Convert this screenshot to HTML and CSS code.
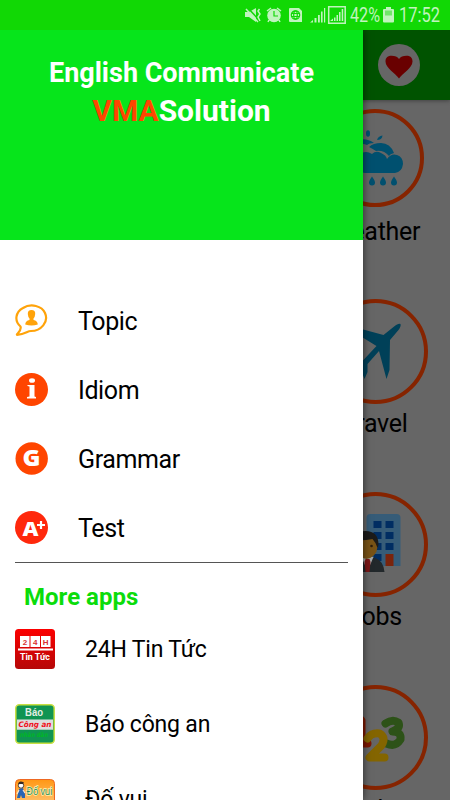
FILE: index.html
```html
<!DOCTYPE html>
<html lang="en">
<head>
    <meta charset="UTF-8">
    <title>English Communicate</title>
    <link rel="stylesheet" href="styles.css">
</head>
<body>
    <div class="phone">
        <div class="status-bar">
            <svg class="status-icons" width="220" height="30" viewBox="230 0 220 30">
                <!-- muted -->
                <path d="M245 12h4l7-4v14l-7-5h-4z"/>
                <path class="cut" d="M247 7l13 14"/>
                <path class="line" d="M246 9l12 13M259.500 9l-1.500 2 2 3-2 3 2 4"/>
                <!-- alarm -->
                <circle cx="274" cy="15.500" r="6.800"/>
                <path class="line" d="M267 11l4-3M281 11l-4-3M269 20l-1 2M279 20l1 2"/>
                <path class="cut thin" d="M274 11v5h4"/>
                <!-- sim -->
                <path d="M290 8h9l3 3v11h-12q-1 0-1-1V9q0-1 1-1z"/>
                <g class="cut thin"><circle cx="295.500" cy="15" r="4.200"/><ellipse cx="295.500" cy="15" rx="1.800" ry="4.200"/><path d="M291.500 13.500h8M291.500 16.500h8"/></g>
                <!-- signal -->
                <path d="M310 22.500l3-2.500v2.500zM314.500 18h2v4.500h-2zM318 15h1.800v7.500H318zM321 11.500h1.600v11H321zM324 8h1.200v14.500H324z"/>
                <path class="line" d="M328.700 6.800h16.500v16.400h-16.500z"/>
                <path d="M330 21l3-2.500V21zM334 17.500h1.500V21H334zM336.500 15h1.500v6h-1.500zM339 12h1.500v9H339zM341.700 9h1.500v12h-1.500z"/>
                <text x="350" y="22" textLength="30" lengthAdjust="spacingAndGlyphs">42%</text>
                <!-- battery -->
                <path d="M386 7h5v2h-5zM384 9h9q1 0 1 1v11.500q0 1-1 1h-9q-1 0-1-1V10q0-1 1-1z"/>
                <path class="empty" d="M385 10.500h7v5h-7z"/>
                <text x="399" y="22" textLength="41" lengthAdjust="spacingAndGlyphs">17:52</text>
            </svg>
        </div>

        <div class="toolbar">
            <div class="favorite">
                <svg width="28" height="24" viewBox="0 0 28 24"><path d="M14 23.500C11 19 .5 13 .5 6.500.5 2.500 3 .8 6.500.8c3.500 0 6 1 7.500 3.200C15.500 1.800 18 .8 21.500.8c3.500 0 6 1.700 6 5.700C27.500 13 17 19 14 23.500z"/></svg>
            </div>
        </div>

        <div class="topics">
            <div class="topic">
                <svg class="topic-icon small" viewBox="326 109 98 98">
                    <circle class="ring" cx="375" cy="158" r="47"/>
                    <g fill="#00506f">
                        <ellipse cx="368" cy="133.500" rx="2" ry="3.300"/>
                        <path d="M377 140q1-4 5.500-4.500-.5 4.500-5.500 4.500z"/>
                        <path d="M355 142q9-6 19 1-5 0-7 2-4-2-10 0z"/>
                        <path d="M369 147q4-4 12-4 9 0 13 10-4 1-5 3-5-6-13-5-3-2-7-4z"/>
                        <path d="M365 173q-11-1-11-11 1-10 12-10 3 0 6 2 4-4 9-1 5 2 6 6 4-6 10-4 6 2 6 9-1 8-8 9z"/>
                        <path d="M372 176.500q3 4 3 6a3 3 0 0 1-6 0q0-2 3-6zM383 176.500q3 4 3 6a3 3 0 0 1-6 0q0-2 3-6zM394 176.500q3 4 3 6a3 3 0 0 1-6 0q0-2 3-6z"/>
                    </g>
                </svg>
                <span>Weather</span>
            </div>
            <div class="topic">
                <svg class="topic-icon" viewBox="322.500 299 105 105">
                    <circle class="ring" cx="375" cy="351.500" r="50.500"/>
                    <path fill="#004058" d="M400 324q.8 2-2 6l-8.500 10-.5 30-3 9-7.500-28L367 364v8l-3 7-4-10-9-4 3-3 8-1 14-15-13-8-20-10 3-3 37 10L393 327q5-4 7-3z"/>
                </svg>
                <span>Travel</span>
            </div>
            <div class="topic">
                <svg class="topic-icon" viewBox="322.500 492 105 105">
                    <circle class="ring" cx="375" cy="544.500" r="50.500"/>
                    <path fill="#365c78" d="M366 566v-48q0-4 4-4h26q4 0 4 4v48z"/>
                    <path fill="#002d62" d="M373 521h8v7h-8zM385 521h8v7h-8zM373 532h8v7h-8zM385 532h8v7h-8zM373 543h8v7h-8zM385 543h8v7h-8zM373 554h8v7h-8z"/>
                    <path fill="#7a240c" d="M385 554h8v12h-8z"/>
                    <path fill="#22282b" d="M350 572q0-12 11-14l5-2 9 2q8 3 9 14z"/>
                    <path fill="#a4a9aa" d="M361 557l6 14 6-14z"/>
                    <path fill="#7c1717" d="M365 559h4l1 3-1 10h-4l-1-10z"/>
                    <path fill="#785316" d="M354 544q0-8 11-9 12 1 12 12-1 10-11 12-11-2-12-15z"/>
                    <path fill="#1c1b19" d="M353 548q-3-17 12-17 13 0 13 14l-1 3q-2-6-5-9-10 2-16 1-2 3-3 8z"/>
                    <circle fill="#2b1c0b" cx="371" cy="546" r="1.300"/>
                </svg>
                <span>Jobs</span>
            </div>
            <div class="topic">
                <svg class="topic-icon" viewBox="322.500 684.500 105 105">
                    <circle class="ring" cx="375" cy="737" r="50.500"/>
                    <g class="digits">
                        <path stroke="#7e1800" d="M353 724l8-4v23M352 743h15"/>
                        <path stroke="#2d5218" d="M385 723q7-5 13-1 2 6-6 9 9 0 8 8-5 8-14 4"/>
                        <path stroke="#846500" d="M367 738q4-6 12-5 7 4 2 12l-12 12h15"/>
                    </g>
                </svg>
                <span>Numbers</span>
            </div>
        </div>

        <div class="drawer">
            <div class="drawer-header">
                <div class="app-name">English Communicate</div>
                <div class="company"><span class="vma">VMA</span>Solution</div>
            </div>

            <div class="menu">
                <div class="menu-item">
                    <svg width="33" height="33" viewBox="0 0 33 33">
                        <path fill="none" stroke="#ffa30a" stroke-width="2.200" stroke-linejoin="round" d="M5.500 22.500C-1 17 .5 8 8 4c8-5 19-2 22 5 4 9-4 18-14 18-4 0-5 3-14 3.800C1 30.500 7 27 5.500 22.500z"/>
                        <path fill="#ffa30a" d="M16.500 6q4 0 3.700 4-.2 3-1.700 4.500v1.500q4 .5 4.300 4.500-6.300 2-12.600 0 .3-4 4.300-4.500v-1.500q-1.500-1.500-1.700-4.500-.2-4 3.700-4z"/>
                    </svg>
                    <span>Topic</span>
                </div>
                <div class="menu-item">
                    <svg width="33" height="33" viewBox="0 0 33 33">
                        <circle fill="#ff4500" cx="16.500" cy="16.500" r="16.500"/>
                        <ellipse fill="#fff" cx="17" cy="7.500" rx="3" ry="2.300"/>
                        <path fill="#fff" d="M12.500 12h7v11.500l1.500.5v1.500h-9V24l2.500-.5v-10L12.500 13z"/>
                    </svg>
                    <span>Idiom</span>
                </div>
                <div class="menu-item">
                    <svg width="33" height="33" viewBox="0 0 33 33">
                        <circle fill="#ff4500" cx="16.700" cy="16.500" r="16.200"/>
                        <text class="badge-letter" x="7.500" y="24" font-size="22" textLength="18" lengthAdjust="spacingAndGlyphs">G</text>
                    </svg>
                    <span>Grammar</span>
                </div>
                <div class="menu-item">
                    <svg width="33" height="33" viewBox="0 0 33 33">
                        <circle fill="#ff280c" cx="16.500" cy="16.500" r="16.500"/>
                        <text class="badge-letter" x="7.500" y="24.500" font-size="20" textLength="16" lengthAdjust="spacingAndGlyphs">A</text>
                        <path stroke="#fff" stroke-width="2.200" d="M22 14h8M26 10v8"/>
                    </svg>
                    <span>Test</span>
                </div>
            </div>

            <div class="more-title">More apps</div>
            <div class="apps">
                <div class="app-item">
                    <svg width="40" height="40" viewBox="0 0 40 40">
                        <defs><linearGradient id="red" x2="0" y2="1"><stop stop-color="#fc0000"/><stop offset="1" stop-color="#b50808"/></linearGradient></defs>
                        <rect fill="url(#red)" width="40" height="40" rx="3.500"/>
                        <path fill="#fff" d="M5 7h9.500v11H5zM15.500 7H25v11h-9.500zM26 7h9.500v11H26zM3 19.500h35v2H3z"/>
                        <g class="clock-text"><text x="10" y="15.500">2</text><text x="20.300" y="15.500">4</text><text x="30.700" y="15.500">H</text></g>
                        <text class="news-text" x="5" y="31" textLength="30" lengthAdjust="spacingAndGlyphs">Tin Tức</text>
                    </svg>
                    <span>24H Tin Tức</span>
                </div>
                <div class="app-item">
                    <svg width="40" height="40" viewBox="0 0 40 40">
                        <rect fill="#109452" stroke="#c8df41" stroke-width="1.500" x=".8" y=".8" width="38.400" height="38.400" rx="3.500"/>
                        <path fill="#ddd" d="M2 15.500h36v10.300H2z"/>
                        <text class="police-text upright" x="10" y="12" font-size="10" fill="#e4eee5" textLength="18" lengthAdjust="spacingAndGlyphs">Báo</text>
                        <text class="police-text slanted" x="3.500" y="23.200" font-size="7.500" fill="#f01020" textLength="33" lengthAdjust="spacingAndGlyphs">Công an</text>
                        <text class="police-text slanted" x="5" y="33" font-size="6.500" fill="#00b627" textLength="28" lengthAdjust="spacingAndGlyphs">nhân dân</text>
                    </svg>
                    <span>Báo công an</span>
                </div>
                <div class="app-item">
                    <svg width="40" height="40" viewBox="0 0 40 40">
                        <defs><linearGradient id="orange" x2="0" y2="1"><stop stop-color="#ff9714"/><stop offset=".6" stop-color="#ffc16b"/></linearGradient></defs>
                        <rect fill="url(#orange)" stroke="#ee6822" x=".5" y=".5" width="39" height="39" rx="4"/>
                        <circle fill="#fff" stroke="#222" stroke-width=".8" cx="6" cy="6.500" r="2.700"/>
                        <path fill="#332824" d="M3 5q1-4 6-1.500L8 5z"/>
                        <path fill="#2864b4" d="M4 10l4-1 2 6v4H7l-1-3-1 3H2z"/>
                        <path stroke="#f7e6d5" stroke-width="1.200" d="M4 11l-2 4M8 11l2 3"/>
                        <text class="quiz-text" x="11.500" y="15.500" textLength="26" lengthAdjust="spacingAndGlyphs">Đố vui</text>
                    </svg>
                    <span>Đố vui</span>
                </div>
            </div>
        </div>
    </div>
</body>
</html>
```

FILE: styles.css
```css
body {
    margin: 0;
    font-family: Roboto, sans-serif;
    color: #000;
}

.phone {
    position: relative;
    width: 450px;
    height: 800px;
    overflow: hidden;
    background-color: #666;
}

.status-bar {
    height: 30px;
    display: flex;
    justify-content: flex-end;
    background-color: #11d805;
}

.status-icons {
    fill: #c0f4bd;
    font-size: 19.5px;
}

.status-icons .line {
    fill: none;
    stroke: #c0f4bd;
    stroke-width: 1.5;
}

.status-icons .cut {
    fill: none;
    stroke: #11d805;
    stroke-width: 1.5;
}

.status-icons .thin {
    stroke-width: 1.2;
}

.status-icons .empty {
    fill: #70e669;
}

/* Page behind the drawer */
.toolbar {
    height: 70px;
    display: flex;
    justify-content: flex-end;
    align-items: center;
    padding-right: 30px;
    box-sizing: border-box;
    background-color: #005300;
    box-shadow: 0 1px 4px rgba(0, 0, 0, 0.35);
    clip-path: inset(0 0 -6px 0);
}

.favorite {
    width: 42px;
    height: 42px;
    border-radius: 50%;
    background-color: #666;
    display: flex;
    align-items: center;
    justify-content: center;
}

.favorite svg {
    margin-top: 3px;
    fill: #690000;
}

.topics {
    width: 150px;
    margin-left: 300px;
    padding-top: 9px;
}

.topic {
    display: flex;
    flex-direction: column;
    align-items: center;
    height: 193px;
    font-size: 25px;
    letter-spacing: -0.3px;
    line-height: 30px;
}

.topic:first-child {
    height: 190px;
}

.topic-icon {
    width: 105px;
    height: 105px;
    margin-bottom: 5px;
    flex-shrink: 0;
}

.topic-icon.small {
    width: 98px;
    height: 98px;
    margin-bottom: 10px;
}

.ring {
    fill: none;
    stroke: #862400;
    stroke-width: 4;
}

.digits {
    fill: none;
    stroke-width: 8;
    stroke-linecap: round;
    stroke-linejoin: round;
}

/* Navigation drawer */
.drawer {
    position: absolute;
    top: 30px;
    left: 0;
    width: 363px;
    height: 770px;
    overflow: hidden;
    background-color: #fff;
    box-shadow: 0 0 8px rgba(0, 0, 0, 0.6);
    clip-path: inset(0 -12px 0 0);
}

.drawer-header {
    height: 210px;
    padding-top: 24px;
    box-sizing: border-box;
    background-color: #06e51b;
    color: #fff;
    font-weight: bold;
    text-align: center;
}

.app-name {
    font-size: 27px;
    line-height: 38px;
}

.company {
    font-size: 30px;
    line-height: 38px;
}

.vma {
    color: #ff4500;
}

.menu {
    margin: 0 15px;
    padding-top: 46px;
    height: 276px;
    border-bottom: 1px solid #555;
}

.menu-item {
    display: flex;
    align-items: center;
    gap: 30px;
    height: 69px;
    font-size: 25px;
    letter-spacing: -0.4px;
}

.menu-item span {
    padding-top: 2px;
}

.badge-letter {
    fill: #fff;
    font-family: "Open Sans", sans-serif;
    font-weight: 800;
    letter-spacing: 0;
}

.more-title {
    padding: 19px 0 0 24px;
    margin-bottom: -1px;
    font-size: 24px;
    line-height: 30px;
    font-weight: bold;
    color: #0bdc0b;
}

.app-item {
    display: flex;
    align-items: center;
    gap: 30px;
    height: 75px;
    padding-left: 15px;
    font-size: 23px;
    letter-spacing: -0.2px;
}

.app-item span {
    padding-top: 2px;
}

.app-item svg {
    letter-spacing: 0;
}

.clock-text {
    fill: #d83030;
    font-family: "Liberation Sans", sans-serif;
    font-size: 8px;
    font-weight: bold;
    text-anchor: middle;
}

.news-text {
    fill: #fff;
    font-size: 9.5px;
    font-weight: bold;
}

.police-text {
    font-family: "DejaVu Sans", sans-serif;
    font-weight: bold;
}

.upright {
    font-family: "Liberation Sans", sans-serif;
}

.slanted {
    font-style: italic;
}

.quiz-text {
    font-family: "Open Sans", sans-serif;
    font-size: 10.5px;
    fill: #27865a;
    stroke: #fff2b0;
    stroke-width: 1.5;
    paint-order: stroke;
}
```
